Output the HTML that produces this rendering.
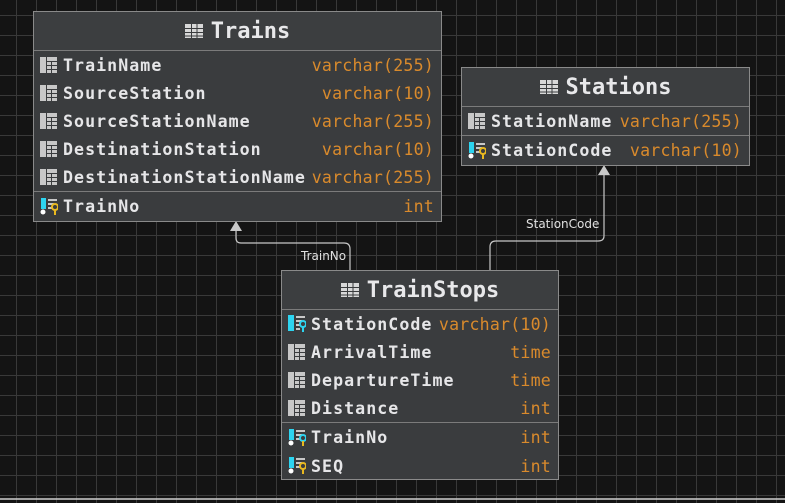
<!DOCTYPE html>
<html><head><style>
body{margin:0;width:785px;height:503px;overflow:hidden;background:#141414;
background-image:linear-gradient(#393939 1px,transparent 1px),linear-gradient(90deg,#393939 1px,transparent 1px);
background-size:20px 20px;background-position:16px 15px;position:relative;font-family:"DejaVu Sans Mono","Liberation Mono",monospace}
.box{position:absolute;background:#3a3c3e;border:1px solid #8a8a8a;box-sizing:border-box}
.hd{height:38px;border-bottom:1px solid #7b7b7b;color:#e8e8ea;font-weight:bold;font-size:22px;display:flex;align-items:center;justify-content:center;background:#3c3e40}
.hd svg{margin-right:8px}
.row{height:28px;display:flex;align-items:center;padding:0 6px;position:relative}
.n{color:#e6e6e8;font-weight:bold;font-size:16.6px;letter-spacing:1.05px;margin-left:5px}
.t{color:#d98a2c;font-size:16.6px;position:absolute;right:7px;letter-spacing:0.2px}
.div{border-top:1px solid #7b7b7b}
.lbl{position:absolute;color:#e0e0e0;font-family:"DejaVu Sans","Liberation Sans",sans-serif;font-size:12px}
</style></head><body>
<svg width="0" height="0" style="position:absolute"><defs>
<g id="tb"><rect x="0" y="0" width="18" height="14" fill="#d8d8d8"/><g stroke="#3a3c3e" stroke-width="1"><line x1="0" y1="4.5" x2="18" y2="4.5"/><line x1="0" y1="8.5" x2="18" y2="8.5"/><line x1="0" y1="12" x2="18" y2="12"/><line x1="6.5" y1="0" x2="6.5" y2="14"/><line x1="12" y1="0" x2="12" y2="14"/></g></g>
<g id="col"><rect x="0" y="0" width="6" height="16" fill="#c8c8c8"/><rect x="7" y="0" width="10" height="16" fill="#c8c8c8"/><g stroke="#3a3c3e"><line x1="7" y1="4.5" x2="17" y2="4.5"/><line x1="7" y1="8.5" x2="17" y2="8.5"/><line x1="7" y1="12.5" x2="17" y2="12.5"/><line x1="11.5" y1="4" x2="11.5" y2="16"/></g></g>
<g id="pk"><rect x="0" y="0" width="6" height="16" fill="#2dd4f0"/><g stroke="#c8c8c8" stroke-width="2"><line x1="8" y1="2" x2="17" y2="2"/><line x1="8" y1="6" x2="14" y2="6"/><line x1="8" y1="10" x2="12" y2="10"/><line x1="8" y1="14" x2="12" y2="14"/></g><circle cx="15" cy="9" r="3" fill="none" stroke="#2dd4f0" stroke-width="2"/><line x1="15" y1="12" x2="15" y2="17" stroke="#2dd4f0" stroke-width="2"/></g>
<g id="fk"><rect x="1" y="0" width="5" height="11" fill="#2dd4f0"/><circle cx="3" cy="14" r="2.5" fill="#fff"/><g stroke="#c8c8c8" stroke-width="2"><line x1="8" y1="2" x2="17" y2="2"/><line x1="8" y1="6" x2="14" y2="6"/><line x1="8" y1="10" x2="12" y2="10"/></g><circle cx="15" cy="9" r="3" fill="none" stroke="#e8b820" stroke-width="2"/><line x1="15" y1="12" x2="15" y2="17" stroke="#e8b820" stroke-width="2"/></g>
<g id="pfk"><rect x="1" y="0" width="5" height="11" fill="#2dd4f0"/><circle cx="3" cy="14" r="2.5" fill="#fff"/><g stroke="#c8c8c8" stroke-width="2"><line x1="8" y1="2" x2="17" y2="2"/><line x1="8" y1="6" x2="14" y2="6"/><line x1="8" y1="10" x2="12" y2="10"/></g><circle cx="15" cy="9" r="3" fill="none" stroke="#2dd4f0" stroke-width="2"/><line x1="15" y1="12" x2="15" y2="17" stroke="#e8b820" stroke-width="2"/></g>
</defs></svg>

<svg style="position:absolute;left:0;top:0" width="785" height="503">
<path d="M236 231 V238 Q236 243 241 243 H344 Q350 243 350 249 V270" fill="none" stroke="#c8c8c8" stroke-width="1.2"/>
<polygon points="236,221 230,231 242,231" fill="#c8c8c8"/>
<path d="M604 175 V236 Q604 241 598 241 H496 Q490 241 490 247 V270" fill="none" stroke="#c8c8c8" stroke-width="1.2"/>
<polygon points="604,165 598,175 610,175" fill="#c8c8c8"/>
<line x1="0" y1="499" x2="785" y2="499" stroke="#d0d0d0" stroke-width="1.5"/>
</svg>
<div class="lbl" style="left:301px;top:249px">TrainNo</div>
<div class="lbl" style="left:526px;top:217px">StationCode</div>

<div class="box" style="left:33px;top:11px;width:409px;height:211px">
<div class="hd"><svg width="18" height="14"><use href="#tb"/></svg>Trains</div>
<div class="row"><svg width="18" height="16"><use href="#col"/></svg><span class="n">TrainName</span><span class="t">varchar(255)</span></div>
<div class="row"><svg width="18" height="16"><use href="#col"/></svg><span class="n">SourceStation</span><span class="t">varchar(10)</span></div>
<div class="row"><svg width="18" height="16"><use href="#col"/></svg><span class="n">SourceStationName</span><span class="t">varchar(255)</span></div>
<div class="row"><svg width="18" height="16"><use href="#col"/></svg><span class="n">DestinationStation</span><span class="t">varchar(10)</span></div>
<div class="row"><svg width="18" height="16"><use href="#col"/></svg><span class="n">DestinationStationName</span><span class="t">varchar(255)</span></div>
<div class="row div" style="height:29px"><svg width="18" height="18"><use href="#fk"/></svg><span class="n">TrainNo</span><span class="t">int</span></div>
</div>

<div class="box" style="left:461px;top:67px;width:289px;height:99px">
<div class="hd"><svg width="18" height="14"><use href="#tb"/></svg>Stations</div>
<div class="row"><svg width="18" height="16"><use href="#col"/></svg><span class="n">StationName</span><span class="t">varchar(255)</span></div>
<div class="row div" style="height:29px"><svg width="18" height="18"><use href="#fk"/></svg><span class="n">StationCode</span><span class="t">varchar(10)</span></div>
</div>

<div class="box" style="left:281px;top:270px;width:278px;height:210px">
<div class="hd"><svg width="18" height="14"><use href="#tb"/></svg>TrainStops</div>
<div class="row"><svg width="18" height="18"><use href="#pk"/></svg><span class="n">StationCode</span><span class="t">varchar(10)</span></div>
<div class="row"><svg width="18" height="16"><use href="#col"/></svg><span class="n">ArrivalTime</span><span class="t">time</span></div>
<div class="row"><svg width="18" height="16"><use href="#col"/></svg><span class="n">DepartureTime</span><span class="t">time</span></div>
<div class="row"><svg width="18" height="16"><use href="#col"/></svg><span class="n">Distance</span><span class="t">int</span></div>
<div class="row div" style="height:29px"><svg width="18" height="18"><use href="#pfk"/></svg><span class="n">TrainNo</span><span class="t">int</span></div>
<div class="row"><svg width="18" height="18"><use href="#fk"/></svg><span class="n">SEQ</span><span class="t">int</span></div>
</div>
</body></html>
